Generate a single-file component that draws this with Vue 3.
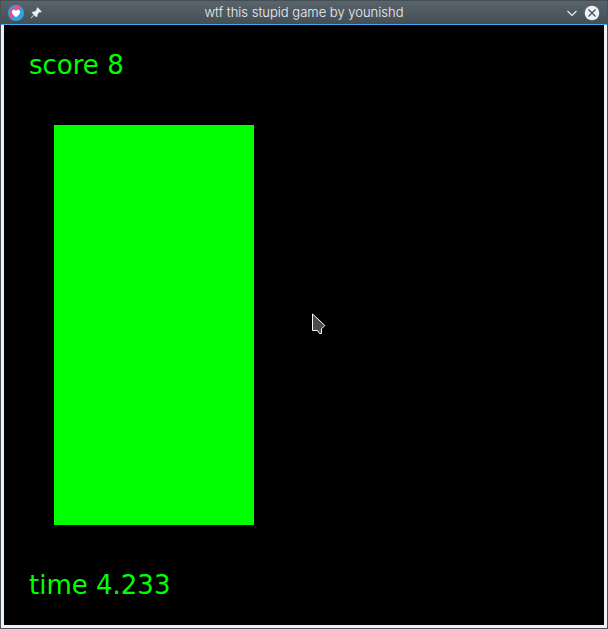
<script setup>
import { ref } from 'vue'

const title = 'wtf this stupid game by younishd'
const score = ref(8)
const time = ref(4.233)
</script>

<template>
  <div class="window">
    <header class="titlebar">
      <div class="side">
        <svg class="app-icon" viewBox="0 0 16 16" aria-hidden="true">
          <circle cx="8" cy="8" r="8" fill="#27a8e0" />
          <path d="M3.4 14.6A8 8 0 0 1 13.6 2.4Z" fill="#e74a99" />
          <path d="M8 12.2 4.8 9.4C3 7.4 4 4.8 5.9 4.8 6.9 4.8 7.6 5.4 8 6 8.4 5.4 9.1 4.8 10.1 4.8 12 4.8 13 7.4 11.2 9.4Z" fill="#fff" />
        </svg>
        <button class="control" type="button" aria-label="Keep on all desktops">
          <svg viewBox="0 0 16 16">
            <path d="M9.5 2.5 13.5 6.5 12.3 7.2 11.5 7 9.3 9.2 9.3 11.2 8.3 12 6.3 10 3 13.2 2.8 13 6 9.7 4 7.7 4.8 6.7 6.8 6.7 9 4.5 8.8 3.7Z" fill="#eff0f1" stroke="#eff0f1" stroke-width=".4" />
          </svg>
        </button>
      </div>
      <h1 class="title">{{ title }}</h1>
      <div class="side end">
        <button class="control" type="button" aria-label="Minimize">
          <svg viewBox="0 0 16 16">
            <path d="M3.5 6 8 10.5 12.5 6" fill="none" stroke="#eff0f1" stroke-width="1.1" />
          </svg>
        </button>
        <button class="control" type="button" aria-label="Close">
          <svg viewBox="0 0 16 16">
            <circle cx="8" cy="8" r="7.3" fill="#eff0f1" />
            <path d="M4.5 4.5 11.5 11.5M11.5 4.5 4.5 11.5" stroke="#434a50" stroke-width="1.2" />
          </svg>
        </button>
      </div>
    </header>
    <main class="stage">
      <p class="readout">score {{ score }}</p>
      <div class="block"></div>
      <p class="readout">time {{ time }}</p>
      <svg class="pointer" viewBox="0 0 14 22" aria-hidden="true">
        <path d="M.5 1 12.8 12.5 9.5 15.8V20.5H7.5L5.5 17.5H.5Z" fill="#4d4d4d" stroke="#fff" stroke-width="1" />
      </svg>
    </main>
  </div>
</template>

<style>
body {
  margin: 0;
}
</style>

<style scoped>
.window {
  box-sizing: border-box;
  display: flex;
  flex-direction: column;
  min-height: 100vh;
  border: 1px solid #475057;
  border-top: 0;
  background: #eff0f6;
}

.titlebar {
  display: flex;
  align-items: center;
  justify-content: space-between;
  box-sizing: border-box;
  height: 25px;
  padding: 0 7px;
  border-top: 1px solid #454d54;
  border-bottom: 1px solid #3daee9;
  background: linear-gradient(#59636b, #454e55);
}

.side {
  display: flex;
  align-items: center;
  gap: 4px;
}

.end {
  justify-content: flex-end;
}

.app-icon,
.control,
.control svg {
  display: block;
  width: 16px;
  height: 16px;
}

.control {
  padding: 0;
  border: 0;
  background: none;
}

.title {
  margin: 0;
  padding-bottom: 2px;
  color: #eff0f1;
  font: 300 13px/20px Inter, sans-serif;
}

.stage {
  position: relative;
  display: grid;
  flex: 1;
  grid-template-rows: 100px 1fr 100px;
  margin: 0 3px 3px;
  background: #000;
}

.readout {
  margin: 0;
  padding: 25px 25px 0;
  color: #0f0;
  font: 26px/30px "DejaVu Sans", sans-serif;
}

.readout:last-of-type {
  padding-top: 45px;
}

.block {
  width: calc(100% / 3);
  margin-left: 50px;
  background: #0f0;
}

.pointer {
  position: absolute;
  top: 288px;
  left: 308px;
  width: 14px;
  height: 22px;
}
</style>
